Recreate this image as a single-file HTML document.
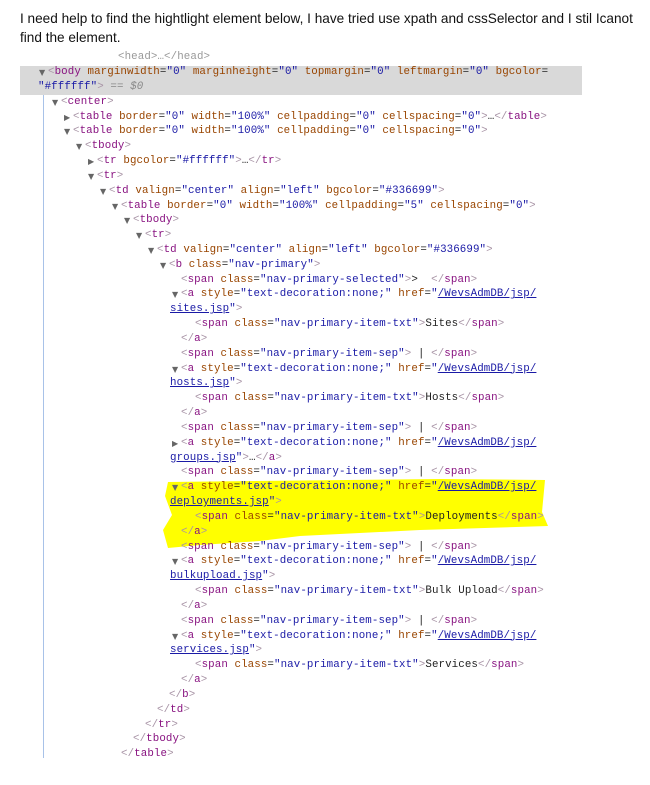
<!DOCTYPE html>
<html><head><meta charset="utf-8"><style>
body{margin:0;width:650px;height:785px;background:#fff;position:relative;overflow:hidden}
.q{position:absolute;left:20px;font:13.6px "Liberation Sans",sans-serif;color:#111}
.l{position:absolute;height:15px;line-height:15px;font:10.8px "Liberation Mono",monospace;letter-spacing:0.1px;white-space:pre;color:#222}
.t{color:#881280}.k{color:#a894a6}.a{color:#994500}.v{color:#1a1aa6}.u{color:#1a1aa6;text-decoration:underline}
.ar{position:absolute;font:8px "DejaVu Sans",sans-serif;color:#666;line-height:14px}
</style></head><body>
<div class="q" style="top:11px">I need help to find the hightlight element below, I have tried use xpath and cssSelector and I stil Icanot</div>
<div class="q" style="top:30px">find the element.</div>
<div style="position:absolute;left:20px;top:66px;width:562px;height:29px;background:#d9d9d9"></div>
<div style="position:absolute;left:43px;top:95px;width:1px;height:663px;background:#a8c2e8"></div>
<svg style="position:absolute;left:0;top:0" width="650" height="785"><path d="M168 482 L440 479 L545 480 L542 512 L548 526 L420 530 L300 536 L260 541 L200 545 L168 548 L163 530 L172 515 L165 496 Z" fill="#ffff00"/></svg>
<div class="l" style="left:118px;top:51px;color:#999">&lt;head&gt;…&lt;/head&gt;</div>
<div id="c"></div>
<script>
const L=[
[48,'<k>&lt;</k><t>body</t> <a>marginwidth</a>=<v>"0"</v> <a>marginheight</a>=<v>"0"</v> <a>topmargin</a>=<v>"0"</v> <a>leftmargin</a>=<v>"0"</v> <a>bgcolor</a>=',1],
[38,'<v>"#ffffff"</v><k>&gt;</k> <span style="color:#888;font-style:italic">== $0</span>',0],
[61,'<k>&lt;</k><t>center</t><k>&gt;</k>',1],
[73,'<k>&lt;</k><t>table</t> <a>border</a>=<v>"0"</v> <a>width</a>=<v>"100%"</v> <a>cellpadding</a>=<v>"0"</v> <a>cellspacing</a>=<v>"0"</v><k>&gt;</k>…<k>&lt;/</k><t>table</t><k>&gt;</k>',2],
[73,'<k>&lt;</k><t>table</t> <a>border</a>=<v>"0"</v> <a>width</a>=<v>"100%"</v> <a>cellpadding</a>=<v>"0"</v> <a>cellspacing</a>=<v>"0"</v><k>&gt;</k>',1],
[85,'<k>&lt;</k><t>tbody</t><k>&gt;</k>',1],
[97,'<k>&lt;</k><t>tr</t> <a>bgcolor</a>=<v>"#ffffff"</v><k>&gt;</k>…<k>&lt;/</k><t>tr</t><k>&gt;</k>',2],
[97,'<k>&lt;</k><t>tr</t><k>&gt;</k>',1],
[109,'<k>&lt;</k><t>td</t> <a>valign</a>=<v>"center"</v> <a>align</a>=<v>"left"</v> <a>bgcolor</a>=<v>"#336699"</v><k>&gt;</k>',1],
[121,'<k>&lt;</k><t>table</t> <a>border</a>=<v>"0"</v> <a>width</a>=<v>"100%"</v> <a>cellpadding</a>=<v>"5"</v> <a>cellspacing</a>=<v>"0"</v><k>&gt;</k>',1],
[133,'<k>&lt;</k><t>tbody</t><k>&gt;</k>',1],
[145,'<k>&lt;</k><t>tr</t><k>&gt;</k>',1],
[157,'<k>&lt;</k><t>td</t> <a>valign</a>=<v>"center"</v> <a>align</a>=<v>"left"</v> <a>bgcolor</a>=<v>"#336699"</v><k>&gt;</k>',1],
[169,'<k>&lt;</k><t>b</t> <a>class</a>=<v>"nav-primary"</v><k>&gt;</k>',1],
[181,'<k>&lt;</k><t>span</t> <a>class</a>=<v>"nav-primary-selected"</v><k>&gt;</k>&gt;  <k>&lt;/</k><t>span</t><k>&gt;</k>',0]];
function A(f,txt){L.push([181,'<k>&lt;</k><t>a</t> <a>style</a>=<v>"text-decoration:none;"</v> <a>href</a>=<v>"</v><u>/WevsAdmDB/jsp/</u>',1]);
L.push([170,'<u>'+f+'</u><v>"</v><k>&gt;</k>'+(txt?'':'…<k>&lt;/</k><t>a</t><k>&gt;</k>'),0]);
if(txt){L.push([195,'<k>&lt;</k><t>span</t> <a>class</a>=<v>"nav-primary-item-txt"</v><k>&gt;</k>'+txt+'<k>&lt;/</k><t>span</t><k>&gt;</k>',0]);L.push([181,'<k>&lt;/</k><t>a</t><k>&gt;</k>',0]);}}
function S(){L.push([181,'<k>&lt;</k><t>span</t> <a>class</a>=<v>"nav-primary-item-sep"</v><k>&gt;</k> | <k>&lt;/</k><t>span</t><k>&gt;</k>',0]);}
A('sites.jsp','Sites');S();A('hosts.jsp','Hosts');S();
L.push([181,'<k>&lt;</k><t>a</t> <a>style</a>=<v>"text-decoration:none;"</v> <a>href</a>=<v>"</v><u>/WevsAdmDB/jsp/</u>',2]);
L.push([170,'<u>groups.jsp</u><v>"</v><k>&gt;</k>…<k>&lt;/</k><t>a</t><k>&gt;</k>',0]);
S();A('deployments.jsp','Deployments');S();A('bulkupload.jsp','Bulk Upload');S();A('services.jsp','Services');
L.push([169,'<k>&lt;/</k><t>b</t><k>&gt;</k>',0]);L.push([157,'<k>&lt;/</k><t>td</t><k>&gt;</k>',0]);
L.push([145,'<k>&lt;/</k><t>tr</t><k>&gt;</k>',0]);L.push([133,'<k>&lt;/</k><t>tbody</t><k>&gt;</k>',0]);L.push([121,'<k>&lt;/</k><t>table</t><k>&gt;</k>',0]);
let h='';L.forEach((r,i)=>{const top=(66+i*14.83);
const s=r[1].replace(/<k>/g,'<span class="k">').replace(/<t>/g,'<span class="t">').replace(/<a>/g,'<span class="a">').replace(/<v>/g,'<span class="v">').replace(/<u>/g,'<span class="u">').replace(/<\/[ktavu]>/g,'</span>');
h+='<div class="l" style="left:'+r[0]+'px;top:'+top.toFixed(1)+'px">'+s+'</div>';
if(r[2])h+='<div class="ar" style="left:'+(r[0]-9)+'px;top:'+(top).toFixed(1)+'px">'+(r[2]==1?'▼':'▶')+'</div>';});
document.getElementById('c').innerHTML=h;
</script>
</body></html>
